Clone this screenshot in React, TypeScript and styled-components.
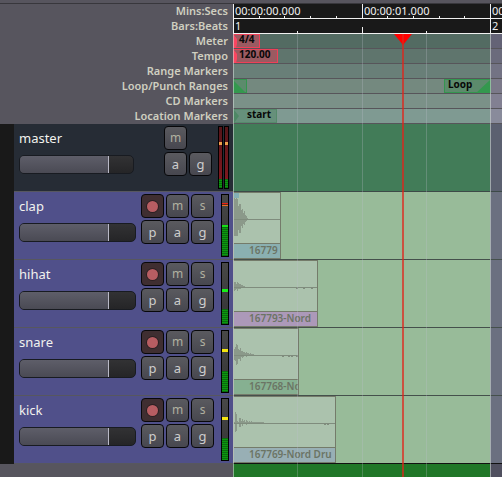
import React from "react";
import styled, { createGlobalStyle } from "styled-components";

const Global = createGlobalStyle`
  *, *::before, *::after { box-sizing: border-box; }
  body { margin: 0; background: #57555e; font-family: "Noto Sans", "Open Sans", sans-serif; }
  button, input { font: inherit; margin: 0; }
`;

const LOOP_END = 257;

const Page = styled.main`
  position: relative;
  display: flex;
  flex-direction: column;
  min-height: 100vh;
  overflow: hidden;
`;

const TopEdge = styled.div`
  height: 4px;
  background: #57555e;
  border-bottom: 1px solid #38373c;
`;

const Row = styled.div`
  display: grid;
  grid-template-columns: 233px minmax(0, 1fr);
`;

const RulerLabel = styled.div`
  height: 15px;
  padding-right: 5px;
  text-align: right;
  font-size: 11px;
  line-height: 14px;
  font-weight: 600;
  color: #cfcfc0;
  white-space: nowrap;
`;

const ClockRuler = styled.div`
  position: relative;
  height: 15px;
  overflow: hidden;
  background: #191919;
  border-bottom: 1px solid #f0f0f0;
`;

const Tick = styled.i<{ $x: number; $h: number }>`
  position: absolute;
  left: ${(p) => p.$x}px;
  bottom: 0;
  width: 1px;
  height: ${(p) => p.$h}px;
  background: #f0f0f0;
`;

const TickText = styled.span<{ $x: number }>`
  position: absolute;
  left: ${(p) => p.$x + 2}px;
  top: 0;
  font-size: 11px;
  line-height: 13px;
  color: #f0f0f0;
`;

const MarkerLane = styled.div<{ $in: string; $out: string }>`
  position: relative;
  height: 15px;
  background: linear-gradient(to right, ${(p) => p.$in} ${LOOP_END}px, ${(p) => p.$out} ${LOOP_END}px);
  border-bottom: 1px solid #57555a;
`;

const Flag = styled.span<{ $bg: string; $line: string; $w: number; $x?: number }>`
  position: absolute;
  left: ${(p) => p.$x ?? 0}px;
  top: 0;
  width: ${(p) => p.$w}px;
  height: 14px;
  padding-left: ${(p) => (p.$x ? 3 : 6)}px;
  border: 1px solid ${(p) => p.$line};
  border-left-width: ${(p) => (p.$x ? 1 : 0)}px;
  background: ${(p) => p.$bg};
  font-size: 10px;
  line-height: 9px;
  font-weight: 700;
  color: #080808;
  white-space: nowrap;
`;

const FlagText = styled.span<{ $indent?: number }>`
  position: relative;
  padding-left: ${(p) => p.$indent ?? 0}px;
`;

const Shape = styled.svg<{ $right?: boolean }>`
  position: absolute;
  top: 0;
  ${(p) => (p.$right ? "right: 0;" : "left: 0;")}
`;

const Header = styled.section<{ $master?: boolean }>`
  display: grid;
  grid-template-columns: ${(p) => (p.$master ? 120 : 122)}px minmax(0, 1fr) auto;
  height: 68px;
  padding: 2px 4px 0 5px;
  border-left: 14px solid #191919;
  box-shadow: inset 0 -1px #57575f;
  background: ${(p) => (p.$master ? "#262c35" : "#50508a")};
`;

const Info = styled.div`
  display: flex;
  flex-direction: column;
  gap: 4px;
  min-width: 0;
`;

const Name = styled.h2`
  margin: 0;
  height: 25px;
  font-size: 13px;
  line-height: 24px;
  font-weight: 400;
  color: #f2f2ee;
`;

const Fader = styled.input<{ $master?: boolean }>`
  appearance: none;
  width: ${(p) => (p.$master ? 115 : 117)}px;
  height: 19px;
  border: 1px solid #181b21;
  border-radius: 5px;
  overflow: hidden;
  background: linear-gradient(#323234, #252527);
  &::-webkit-slider-runnable-track {
    height: 17px;
    background: linear-gradient(#5e5e69, #4a4a54) left / ${(p) => (p.$master ? 88 : 89)}px 100% no-repeat;
  }
  &::-webkit-slider-thumb {
    appearance: none;
    width: 1px;
    height: 17px;
    background: #b9b9c6;
  }
`;

const Buttons = styled.div`
  display: grid;
  grid-template-columns: repeat(3, 23px);
  grid-auto-rows: 24px;
  gap: 2px;
  align-content: start;
`;

const Btn = styled.button<{ $rec?: boolean; $dim?: boolean; $col?: number }>`
  display: grid;
  place-items: center;
  padding: 0;
  ${(p) => (p.$col ? `grid-column: ${p.$col};` : "")}
  border: 1px solid #08080a;
  border-radius: 4px;
  background: ${(p) => (p.$rec ? "#3f2e31" : "linear-gradient(#5a5a5f, #47474f)")};
  font-size: ${(p) => (p.$dim ? 12 : 13)}px;
  line-height: 20px;
  color: ${(p) => (p.$dim ? "#b0b0a0" : "#cdcdcd")};
`;

const Led = styled.i`
  width: 11px;
  height: 11px;
  border-radius: 50%;
  background: #b75d62;
  box-shadow: 0 0 0 1px #2c2023;
`;

const Meters = styled.div`
  display: flex;
  gap: 1px;
`;

const Meter = styled.div<{ $level: number; $peak: number; $color: string; $slim?: boolean; $hot?: boolean }>`
  position: relative;
  width: ${(p) => (p.$slim ? 5 : 8)}px;
  height: 63px;
  border: 1px solid #000;
  background: ${(p) => (p.$slim ? "linear-gradient(#551519, #861820)" : "linear-gradient(#484848, #333)")};
  &::before {
    content: "";
    position: absolute;
    inset: auto 0 0;
    height: ${(p) => p.$level}px;
    border-top: ${(p) => (p.$hot ? "2px solid #18df18" : "0")};
    background: repeating-linear-gradient(#0a6b0e 0 1px, #0b980f 1px 2px);
  }
  &::after {
    content: "";
    position: absolute;
    inset: ${(p) => p.$peak}px 0 auto;
    height: 3px;
    background: ${(p) => (p.$hot ? "linear-gradient(#f02010 1px, #5a2a20 1px 2px, #f07020 2px)" : p.$color)};
  }
`;

const Lane = styled.div<{ $in: string; $out: string; $line: string }>`
  position: relative;
  overflow: hidden;
  background: linear-gradient(to right, ${(p) => p.$in} ${LOOP_END}px, ${(p) => p.$out} ${LOOP_END}px);
  border-bottom: 1px solid ${(p) => p.$line};
`;

const Region = styled.div<{ $w: number }>`
  display: flex;
  flex-direction: column;
  width: ${(p) => p.$w}px;
  height: 67px;
  border: 1px solid #747b6a;
  border-left-color: #8f9a86;
  background: #abc2ad;
  overflow: hidden;
`;

const Wave = styled.svg`
  display: block;
  flex: none;
  width: 103px;
  height: 50px;
`;

const RegionName = styled.div<{ $bg: string }>`
  flex: 1;
  padding-left: 15px;
  border-top: 1px solid #747b6a;
  background: ${(p) => p.$bg};
  font-size: 10px;
  line-height: 13px;
  font-weight: 600;
  color: #6b7464;
  white-space: nowrap;
`;

const Footer = styled(Row)`
  flex: 1;
  min-height: 13px;
`;

const Overlay = styled.div`
  position: absolute;
  inset: 34px 0 0 233px;
  overflow: hidden;
  pointer-events: none;
`;

const GridLine = styled.i<{ $x: number; $strong?: boolean }>`
  position: absolute;
  top: 0;
  bottom: 0;
  left: ${(p) => p.$x}px;
  width: 1px;
  background: ${(p) => (p.$strong ? "rgba(205,215,210,.6)" : "rgba(190,190,205,.28)")};
`;

const Playhead = styled.div`
  position: absolute;
  top: 0;
  bottom: 0;
  left: 160px;
  width: 20px;
  &::after {
    content: "";
    position: absolute;
    top: 0;
    bottom: 0;
    left: 9px;
    width: 2px;
    background: rgba(225, 35, 25, 0.7);
  }
`;

const lanes = [
  { label: "Meter", bg: "#536b62", out: "#646376" },
  { label: "Tempo", bg: "#5f756d", out: "#6b6b7c" },
  { label: "Range Markers", bg: "#697f78", out: "#737384" },
  { label: "Loop/Punch Ranges", bg: "#74897f", out: "#7b7989" },
  { label: "CD Markers", bg: "#7b9188", out: "#828092" },
  { label: "Location Markers", bg: "#7f9a92", out: "#898b9b" },
];

type Track = {
  name: string; region: string; width: number; color: string;
  level: number; peak: number; peakColor: string; wave: number[]; ticks: number[];
};

const tracks: Track[] = [
  { name: "clap", region: "16779", width: 48, color: "#8ab0b1", level: 31, peak: 8, peakColor: "#ee4a20",
    wave: [23, 20, 22, 20, 13, 15, 15, 9, 10, 6, 8, 4, 3, 1], ticks: [] },
  { name: "hihat", region: "167793-Nord", width: 85, color: "#ac99b9", level: 15, peak: 26, peakColor: "#18f018",
    wave: [5, 5, 3, 5, 4, 3, 3, 2, 2, 1, 1], ticks: [62, 69, 77] },
  { name: "snare", region: "167768-Nord", width: 66, color: "#86b091", level: 21, peak: 18, peakColor: "#f4e510",
    wave: [6, 8, 11, 10, 6, 5, 7, 4, 4, 3, 3, 2, 3, 2, 2, 1, 2, 1, 1, 1], ticks: [48, 54, 57, 62] },
  { name: "kick", region: "167769-Nord Dru", width: 103, color: "#98afb5", level: 22, peak: 18, peakColor: "#f4e510",
    wave: [1, 11, 9, 2, 1, 5, 5, 2, 4, 2, 3, 1, 3, 2, 1, 2, 1, 2, 1, 1, 1, 1, 1, 1, 1, 1, 1, 1, 1, 1], ticks: [90, 93] },
];

function Waveform({ track }: { track: Track }) {
  const base = 26;
  const top = track.wave.map((v, i) => `L${i} ${base - v}H${i + 1}`).join("");
  const bottom = track.wave
    .map((v, i) => ({ v: Math.max(1, Math.min(17, v - (i % 3 === 1 ? 2 : 1))), i }))
    .reverse()
    .map(({ v, i }) => `L${i + 1} ${base + v}H${i}`)
    .join("");
  return (
    <Wave viewBox="0 0 103 50" aria-hidden="true" shapeRendering="crispEdges">
      <path d={`M0 ${base}${top}${bottom}Z`} fill="#8b998a" />
      {track.name === "clap" && <path d="M0 0H5V5H0Z" fill="#83b0b6" />}
      <path d={`M0 ${base + 0.5}H103`} stroke="#7f8c7d" />
      {track.ticks.map((x) => <path key={x} d={`M${x} ${base + 1}h2`} stroke="#7f8c7d" strokeWidth="2" />)}
    </Wave>
  );
}

function LaneMarkers({ label }: { label: string }) {
  if (label === "Meter" || label === "Tempo")
    return (
      <Flag $bg="#9b5a61" $line="#f04058" $w={label === "Meter" ? 27 : 45}>
        <Shape width="4" height="13"><path d="M0 0H1L4 4V9L3 13H0Z" fill="#fa4560" /></Shape>
        <FlagText>{label === "Meter" ? "4/4" : "120.00"}</FlagText>
      </Flag>
    );
  if (label === "Loop/Punch Ranges")
    return (
      <>
        <Flag $bg="#5c8b6c" $line="#34954f" $w={14}>
          <Shape width="13" height="13"><path d="M0 0L13 13H0Z" fill="#34984e" /></Shape>
        </Flag>
        <Flag $bg="#5c8b6c" $line="#34954f" $w={47} $x={211}>
          <FlagText>Loop</FlagText>
          <Shape $right width="14" height="13"><path d="M14 0V13H0Z" fill="#34984e" /></Shape>
        </Flag>
      </>
    );
  if (label === "Location Markers")
    return (
      <Flag $bg="#66907b" $line="#558a6b" $w={44}>
        <Shape width="6" height="13"><path d="M0 0H1L6 6L1 13H0Z" fill="#4d8865" /></Shape>
        <FlagText $indent={8}>start</FlagText>
      </Flag>
    );
  return null;
}

export default function App() {
  return (
    <>
      <Global />
      <Page>
        <TopEdge />
        <Row>
          <RulerLabel>Mins:Secs</RulerLabel>
          <ClockRuler>
            {[26, 51, 77, 103, 154, 180, 206, 231].map((x) => <Tick key={x} $x={x} $h={2} />)}
            {[0, 129, 257].map((x, i) => (
              <React.Fragment key={x}>
                <Tick $x={x} $h={14} />
                <TickText $x={x}>{`00:00:0${i}.000`}</TickText>
              </React.Fragment>
            ))}
          </ClockRuler>
        </Row>
        <Row>
          <RulerLabel>Bars:Beats</RulerLabel>
          <ClockRuler>
            <Tick $x={0} $h={14} /><TickText $x={0}>1</TickText>
            <Tick $x={64} $h={2} /><Tick $x={129} $h={6} /><Tick $x={193} $h={2} />
            <Tick $x={257} $h={14} /><TickText $x={257}>2</TickText>
          </ClockRuler>
        </Row>
        {lanes.map((l) => (
          <Row key={l.label}>
            <RulerLabel>{l.label}</RulerLabel>
            <MarkerLane $in={l.bg} $out={l.out}><LaneMarkers label={l.label} /></MarkerLane>
          </Row>
        ))}
        <Row>
          <Header $master>
            <Info>
              <Name>master</Name>
              <Fader $master type="range" aria-label="master level" min={0} max={115} defaultValue={90} />
            </Info>
            <Buttons>
              <Btn $dim $col={2}>m</Btn>
              <Btn $col={2}>a</Btn>
              <Btn $col={3}>g</Btn>
            </Buttons>
            <Meters>
              <Meter $slim $level={9} $peak={15} $color="#eda04a" />
              <Meter $slim $level={9} $peak={15} $color="#eda04a" />
            </Meters>
          </Header>
          <Lane $in="#427c58" $out="#5b6070" $line="#3d4a48" />
        </Row>
        {tracks.map((t, i) => (
          <Row key={t.name}>
            <Header>
              <Info>
                <Name>{t.name}</Name>
                <Fader type="range" aria-label={`${t.name} level`} min={0} max={117} defaultValue={90} />
              </Info>
              <Buttons>
                <Btn $rec aria-label={`Record ${t.name}`}><Led /></Btn>
                <Btn $dim>m</Btn>
                <Btn $dim>s</Btn>
                <Btn>p</Btn>
                <Btn>a</Btn>
                <Btn>g</Btn>
              </Buttons>
              <Meters>
                <Meter $level={t.level} $peak={t.peak} $color={t.peakColor} $hot={i === 0} />
              </Meters>
            </Header>
            <Lane $in="#98bb99" $out="#6b7080" $line={i === 3 ? "#111" : "#45504c"}>
              <Region $w={t.width}>
                <Waveform track={t} />
                <RegionName $bg={t.color}>{t.region}</RegionName>
              </Region>
            </Lane>
          </Row>
        ))}
        <Footer>
          <div />
          <Lane $in="#207728" $out="#50505f" $line="transparent" />
        </Footer>
        <Overlay>
          <GridLine $x={0} $strong />
          <GridLine $x={64} />
          <GridLine $x={129} />
          <GridLine $x={193} />
          <GridLine $x={257} $strong />
          <Playhead>
            <Shape width="20" height="11"><path d="M1 0H19L10 11Z" fill="#f00" /></Shape>
          </Playhead>
        </Overlay>
      </Page>
    </>
  );
}
